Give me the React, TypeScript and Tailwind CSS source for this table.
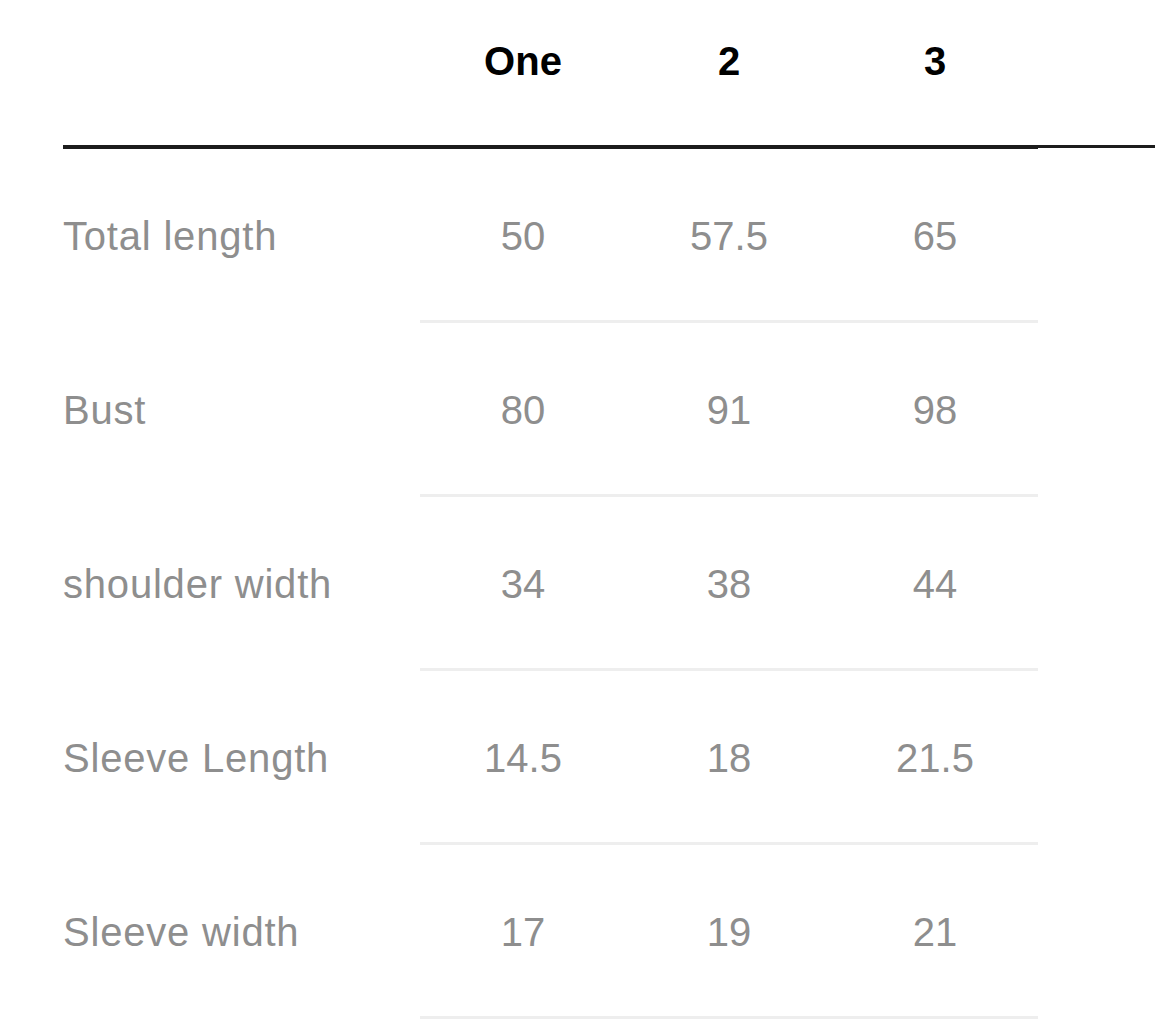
const sizes = ["One", "2", "3"];

const rows: { label: string; values: string[] }[] = [
  { label: "Total length", values: ["50", "57.5", "65"] },
  { label: "Bust", values: ["80", "91", "98"] },
  { label: "shoulder width", values: ["34", "38", "44"] },
  { label: "Sleeve Length", values: ["14.5", "18", "21.5"] },
  { label: "Sleeve width", values: ["17", "19", "21"] },
];

export default function App() {
  return (
    <div className="w-[1155px] h-[1020px] overflow-hidden bg-white pl-[63px] font-['Liberation_Sans',Arial,sans-serif]">
      {/* Header */}
      <div className="flex h-[145px] pt-[41px]">
        <div className="w-[357px] shrink-0" />
        {sizes.map((s) => (
          <div
            key={s}
            className="w-[206px] shrink-0 text-center text-[40px] leading-none font-bold text-black"
          >
            {s}
          </div>
        ))}
      </div>
      <div className="flex items-start">
        <div className="w-[975px] h-[4px] bg-[#1c1c1c]" />
        <div className="flex-1 h-[3px] bg-[#1c1c1c]" />
      </div>

      {/* Rows */}
      {rows.map((row) => (
        <div key={row.label} className="flex h-[174px] items-center">
          <div className="w-[357px] shrink-0 text-[40px] leading-none tracking-[0.8px] text-[#8e8e8e]">
            {row.label}
          </div>
          <div className="flex h-full w-[618px] shrink-0 items-center border-b-[3px] border-[#eeeeee] pt-[3px]">
            {row.values.map((v, i) => (
              <div
                key={i}
                className="w-[206px] shrink-0 text-center text-[40px] leading-none text-[#8e8e8e]"
              >
                {v}
              </div>
            ))}
          </div>
        </div>
      ))}
    </div>
  );
}
